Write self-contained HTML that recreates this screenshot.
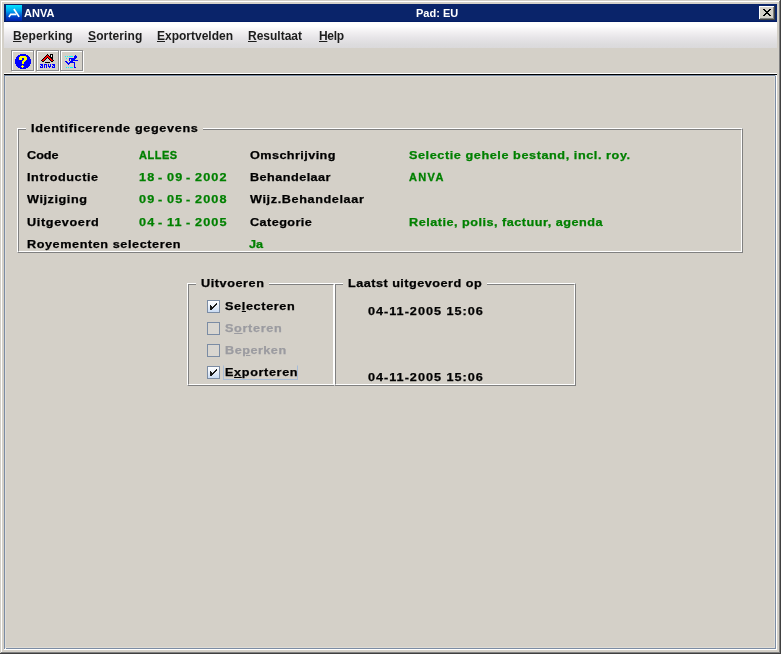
<!DOCTYPE html>
<html><head><meta charset="utf-8">
<style>
*{margin:0;padding:0;box-sizing:border-box}
html,body{width:781px;height:654px;overflow:hidden;background:#D4D0C8}
body{position:relative;font-family:"Liberation Sans",sans-serif}
.a{position:absolute}
.t{position:absolute;white-space:nowrap;font-weight:bold;line-height:1;will-change:transform;font-family:"Liberation Sans",sans-serif}
u{text-decoration:underline;text-underline-offset:1px;text-decoration-thickness:1px}
svg{overflow:visible}
</style></head><body>
<div class="a" style="left:0px;top:0px;width:781px;height:654px;background:#404040;"></div>
<div class="a" style="left:0px;top:0px;width:780px;height:653px;background:#D4D0C8;"></div>
<div class="a" style="left:1px;top:1px;width:779px;height:652px;background:#808080;"></div>
<div class="a" style="left:1px;top:1px;width:778px;height:651px;background:#FFFFFF;"></div>
<div class="a" style="left:2px;top:2px;width:777px;height:650px;background:#D4D0C8;"></div>
<div class="a" style="left:4px;top:4px;width:773px;height:18px;background:#0A246A;"></div>
<div class="a" style="left:4px;top:21px;width:773px;height:1px;background:#031d66;"></div>
<div class="a" style="left:6px;top:5px;width:16px;height:16px;background:linear-gradient(#00e4ff 0%,#00a8f0 35%,#0040c8 75%,#0020a8 100%);"></div>
<svg class="a" style="left:6px;top:5px" width="16" height="16" viewBox="0 0 16 16"><path d="M7.9 4 L13.1 11.9" stroke="#fff" stroke-width="1.7" fill="none"/><path d="M2.9 12 L4.7 9.4 L10.4 9.4" stroke="#fff" stroke-width="1.6" fill="none"/></svg>
<div class="a" style="left:759px;top:6px;width:16px;height:14px;background:#404040;"></div>
<div class="a" style="left:759px;top:6px;width:15px;height:13px;background:#FFFFFF;"></div>
<div class="a" style="left:760px;top:7px;width:14px;height:12px;background:#808080;"></div>
<div class="a" style="left:760px;top:7px;width:13px;height:11px;background:#D4D0C8;"></div>
<svg class="a" style="left:763px;top:9px" width="8" height="7" shape-rendering="crispEdges"><rect x="0" y="0" width="2" height="1" fill="#000"/><rect x="6" y="0" width="2" height="1" fill="#000"/><rect x="1" y="1" width="2" height="1" fill="#000"/><rect x="5" y="1" width="2" height="1" fill="#000"/><rect x="2" y="2" width="4" height="1" fill="#000"/><rect x="3" y="3" width="2" height="1" fill="#000"/><rect x="2" y="4" width="4" height="1" fill="#000"/><rect x="1" y="5" width="2" height="1" fill="#000"/><rect x="5" y="5" width="2" height="1" fill="#000"/><rect x="0" y="6" width="2" height="1" fill="#000"/><rect x="6" y="6" width="2" height="1" fill="#000"/></svg>
<div class="a" style="left:4px;top:22px;width:773px;height:26px;background:linear-gradient(#fdfcfa 0%,#ffffff 4%,#ffffff 16%,#f3f1f3 36%,#e6e4e7 62%,#dddcde 85%,#dad9db 100%);"></div>
<div class="a" style="left:4px;top:73px;width:773px;height:1px;background:#FFFFFF;"></div>
<div class="a" style="left:4px;top:74px;width:773px;height:1px;background:#000000;"></div>
<div class="a" style="left:12px;top:51px;width:23px;height:21px;border:1px solid #fff"></div>
<div class="a" style="left:11px;top:50px;width:23px;height:21px;border:1px solid #8c8c8c"></div>
<div class="a" style="left:37px;top:51px;width:23px;height:21px;border:1px solid #fff"></div>
<div class="a" style="left:36px;top:50px;width:23px;height:21px;border:1px solid #8c8c8c"></div>
<div class="a" style="left:61px;top:51px;width:23px;height:21px;border:1px solid #fff"></div>
<div class="a" style="left:60px;top:50px;width:23px;height:21px;border:1px solid #8c8c8c"></div>
<svg class="a" style="left:15px;top:54px" width="16" height="16" shape-rendering="crispEdges"><rect x="5" y="0" width="6" height="1" fill="#0000FF"/><rect x="3" y="1" width="10" height="1" fill="#0000FF"/><rect x="2" y="2" width="12" height="1" fill="#0000FF"/><rect x="1" y="3" width="14" height="1" fill="#0000FF"/><rect x="1" y="4" width="14" height="1" fill="#0000FF"/><rect x="0" y="5" width="16" height="1" fill="#0000FF"/><rect x="0" y="6" width="16" height="1" fill="#0000FF"/><rect x="0" y="7" width="16" height="1" fill="#0000FF"/><rect x="0" y="8" width="16" height="1" fill="#0000FF"/><rect x="0" y="9" width="16" height="1" fill="#0000FF"/><rect x="1" y="10" width="14" height="1" fill="#0000FF"/><rect x="1" y="11" width="14" height="1" fill="#0000FF"/><rect x="2" y="12" width="12" height="1" fill="#0000FF"/><rect x="3" y="13" width="10" height="1" fill="#0000FF"/><rect x="5" y="14" width="6" height="1" fill="#0000FF"/><rect x="5" y="2" width="6" height="1" fill="#FFFF00"/><rect x="4" y="3" width="8" height="1" fill="#FFFF00"/><rect x="4" y="4" width="3" height="1" fill="#FFFF00"/><rect x="9" y="4" width="3" height="1" fill="#FFFF00"/><rect x="4" y="5" width="3" height="1" fill="#FFFF00"/><rect x="9" y="5" width="3" height="1" fill="#FFFF00"/><rect x="8" y="6" width="3" height="1" fill="#FFFF00"/><rect x="7" y="7" width="3" height="1" fill="#FFFF00"/><rect x="7" y="8" width="2" height="1" fill="#FFFF00"/><rect x="7" y="9" width="2" height="1" fill="#FFFF00"/><rect x="7" y="11" width="1" height="1" fill="#FFFF00"/><rect x="6" y="12" width="3" height="1" fill="#FFFF00"/><rect x="7" y="13" width="1" height="1" fill="#FFFF00"/></svg>
<svg class="a" style="left:38px;top:52px" width="18" height="18" shape-rendering="crispEdges"><rect x="2" y="12" width="3" height="1" fill="#0000FF"/><rect x="6" y="12" width="3" height="1" fill="#0000FF"/><rect x="10" y="12" width="1" height="1" fill="#0000FF"/><rect x="12" y="12" width="1" height="1" fill="#0000FF"/><rect x="14" y="12" width="3" height="1" fill="#0000FF"/><rect x="3" y="13" width="2" height="1" fill="#0000FF"/><rect x="6" y="13" width="1" height="1" fill="#0000FF"/><rect x="8" y="13" width="1" height="1" fill="#0000FF"/><rect x="10" y="13" width="1" height="1" fill="#0000FF"/><rect x="12" y="13" width="1" height="1" fill="#0000FF"/><rect x="15" y="13" width="2" height="1" fill="#0000FF"/><rect x="2" y="14" width="1" height="1" fill="#0000FF"/><rect x="4" y="14" width="1" height="1" fill="#0000FF"/><rect x="6" y="14" width="1" height="1" fill="#0000FF"/><rect x="8" y="14" width="1" height="1" fill="#0000FF"/><rect x="10" y="14" width="3" height="1" fill="#0000FF"/><rect x="14" y="14" width="1" height="1" fill="#0000FF"/><rect x="16" y="14" width="1" height="1" fill="#0000FF"/><rect x="2" y="15" width="3" height="1" fill="#0000FF"/><rect x="6" y="15" width="1" height="1" fill="#0000FF"/><rect x="8" y="15" width="1" height="1" fill="#0000FF"/><rect x="11" y="15" width="1" height="1" fill="#0000FF"/><rect x="14" y="15" width="3" height="1" fill="#0000FF"/><rect x="9" y="2" width="1" height="1" fill="#000"/><rect x="8" y="3" width="1" height="1" fill="#000"/><rect x="10" y="3" width="1" height="1" fill="#000"/><rect x="7" y="4" width="1" height="1" fill="#000"/><rect x="11" y="4" width="1" height="1" fill="#000"/><rect x="6" y="5" width="1" height="1" fill="#000"/><rect x="9" y="5" width="1" height="1" fill="#000"/><rect x="5" y="6" width="1" height="1" fill="#000"/><rect x="8" y="6" width="1" height="1" fill="#000"/><rect x="10" y="6" width="1" height="1" fill="#000"/><rect x="4" y="7" width="1" height="1" fill="#000"/><rect x="7" y="7" width="1" height="1" fill="#000"/><rect x="11" y="7" width="1" height="1" fill="#000"/><rect x="14" y="7" width="1" height="1" fill="#000"/><rect x="3" y="8" width="1" height="1" fill="#000"/><rect x="6" y="8" width="1" height="1" fill="#000"/><rect x="12" y="8" width="1" height="1" fill="#000"/><rect x="15" y="8" width="1" height="1" fill="#000"/><rect x="4" y="9" width="2" height="1" fill="#000"/><rect x="13" y="9" width="2" height="1" fill="#000"/><rect x="7" y="10" width="5" height="1" fill="#000"/><rect x="12" y="2" width="3" height="1" fill="#000"/><rect x="12" y="3" width="1" height="1" fill="#000"/><rect x="14" y="3" width="1" height="1" fill="#000"/><rect x="12" y="4" width="1" height="1" fill="#000"/><rect x="14" y="4" width="1" height="1" fill="#000"/><rect x="12" y="5" width="3" height="1" fill="#000"/><rect x="13" y="6" width="2" height="1" fill="#000"/><rect x="13" y="3" width="1" height="1" fill="#f4f4f4"/><rect x="13" y="4" width="1" height="1" fill="#f4f4f4"/><rect x="9" y="3" width="1" height="1" fill="#FF0000"/><rect x="8" y="4" width="3" height="1" fill="#FF0000"/><rect x="7" y="5" width="2" height="1" fill="#FF0000"/><rect x="10" y="5" width="2" height="1" fill="#FF0000"/><rect x="6" y="6" width="2" height="1" fill="#FF0000"/><rect x="11" y="6" width="2" height="1" fill="#FF0000"/><rect x="5" y="7" width="2" height="1" fill="#FF0000"/><rect x="12" y="7" width="2" height="1" fill="#FF0000"/><rect x="4" y="8" width="2" height="1" fill="#FF0000"/><rect x="13" y="8" width="2" height="1" fill="#FF0000"/></svg>
<svg class="a" style="left:62px;top:52px" width="18" height="18" shape-rendering="crispEdges"><rect x="3" y="4" width="1" height="1" fill="#00FFFF"/><rect x="5" y="4" width="1" height="1" fill="#00FFFF"/><rect x="7" y="4" width="4" height="1" fill="#00FFFF"/><rect x="4" y="6" width="1" height="1" fill="#00FFFF"/><rect x="4" y="15" width="1" height="1" fill="#00FFFF"/><rect x="6" y="15" width="1" height="1" fill="#00FFFF"/><rect x="8" y="15" width="3" height="1" fill="#00FFFF"/><rect x="13" y="3" width="1" height="1" fill="#0000FF"/><rect x="12" y="4" width="3" height="1" fill="#0000FF"/><rect x="12" y="5" width="3" height="1" fill="#0000FF"/><rect x="7" y="6" width="7" height="1" fill="#0000FF"/><rect x="7" y="7" width="1" height="1" fill="#0000FF"/><rect x="9" y="7" width="4" height="1" fill="#0000FF"/><rect x="7" y="8" width="1" height="1" fill="#0000FF"/><rect x="9" y="8" width="7" height="1" fill="#0000FF"/><rect x="3" y="9" width="2" height="1" fill="#0000FF"/><rect x="8" y="9" width="3" height="1" fill="#0000FF"/><rect x="4" y="10" width="2" height="1" fill="#0000FF"/><rect x="7" y="10" width="6" height="1" fill="#0000FF"/><rect x="5" y="11" width="3" height="1" fill="#0000FF"/><rect x="12" y="11" width="1" height="1" fill="#0000FF"/><rect x="6" y="12" width="1" height="1" fill="#0000FF"/><rect x="12" y="12" width="1" height="1" fill="#0000FF"/><rect x="12" y="13" width="1" height="1" fill="#0000FF"/><rect x="12" y="14" width="1" height="1" fill="#0000FF"/><rect x="12" y="15" width="2" height="1" fill="#0000FF"/></svg>
<div class="a" style="left:4px;top:75px;width:773px;height:575px;background:#FFFFFF;"></div>
<div class="a" style="left:4px;top:75px;width:772px;height:574px;background:#7B8CA4;"></div>
<div class="a" style="left:5px;top:76px;width:770px;height:572px;background:#dfdcd6;"></div>
<div class="a" style="left:6px;top:77px;width:768px;height:570px;background:#D4D0C8;"></div>
<div class="a" style="left:775px;top:75px;width:1px;height:1px;background:#c9d2dc;"></div>
<div class="a" style="left:5px;top:648px;width:1px;height:1px;background:#f0f2f5;"></div>
<div class="a" style="left:17px;top:128px;width:726px;height:125px;border:1px solid;border-color:#fff #808080 #808080 #fff"></div>
<div class="a" style="left:18px;top:129px;width:724px;height:123px;border:1px solid;border-color:#808080 #fff #fff #808080"></div>
<div class="a" style="left:26px;top:126px;width:177px;height:6px;background:#D4D0C8;"></div>
<div class="a" style="left:187px;top:283px;width:148px;height:103px;border:1px solid;border-color:#fff #808080 #808080 #fff"></div>
<div class="a" style="left:188px;top:284px;width:146px;height:101px;border:1px solid;border-color:#808080 #fff #fff #808080"></div>
<div class="a" style="left:196px;top:281px;width:73px;height:6px;background:#D4D0C8;"></div>
<div class="a" style="left:334px;top:283px;width:242px;height:103px;border:1px solid;border-color:#fff #808080 #808080 #fff"></div>
<div class="a" style="left:335px;top:284px;width:240px;height:101px;border:1px solid;border-color:#808080 #fff #fff #808080"></div>
<div class="a" style="left:343px;top:281px;width:144px;height:6px;background:#D4D0C8;"></div>
<div class="a" style="left:333px;top:384px;width:1px;height:1px;background:#fff;"></div>
<div class="a" style="left:207px;top:300px;width:13px;height:13px;border:1px solid #7B8CA4;background:linear-gradient(#fbfcfe 0%,#eef3fa 40%,#c9dbf3 100%)"></div>
<svg class="a" style="left:210px;top:303px" width="7" height="7" shape-rendering="crispEdges"><rect x="6" y="0" width="1" height="1" fill="#1a1a1a"/><rect x="5" y="1" width="2" height="1" fill="#1a1a1a"/><rect x="0" y="2" width="1" height="1" fill="#1a1a1a"/><rect x="4" y="2" width="2" height="1" fill="#1a1a1a"/><rect x="0" y="3" width="2" height="1" fill="#1a1a1a"/><rect x="3" y="3" width="2" height="1" fill="#1a1a1a"/><rect x="0" y="4" width="2" height="1" fill="#1a1a1a"/><rect x="2" y="4" width="2" height="1" fill="#1a1a1a"/><rect x="0" y="5" width="3" height="1" fill="#1a1a1a"/><rect x="0" y="6" width="2" height="1" fill="#1a1a1a"/></svg>
<div class="a" style="left:207px;top:322px;width:13px;height:13px;border:1px solid #7B8CA4;background:#d9d6d0"></div>
<div class="a" style="left:207px;top:344px;width:13px;height:13px;border:1px solid #7B8CA4;background:#d9d6d0"></div>
<div class="a" style="left:207px;top:366px;width:13px;height:13px;border:1px solid #7B8CA4;background:linear-gradient(#fbfcfe 0%,#eef3fa 40%,#c9dbf3 100%)"></div>
<svg class="a" style="left:210px;top:369px" width="7" height="7" shape-rendering="crispEdges"><rect x="6" y="0" width="1" height="1" fill="#1a1a1a"/><rect x="5" y="1" width="2" height="1" fill="#1a1a1a"/><rect x="0" y="2" width="1" height="1" fill="#1a1a1a"/><rect x="4" y="2" width="2" height="1" fill="#1a1a1a"/><rect x="0" y="3" width="2" height="1" fill="#1a1a1a"/><rect x="3" y="3" width="2" height="1" fill="#1a1a1a"/><rect x="0" y="4" width="2" height="1" fill="#1a1a1a"/><rect x="2" y="4" width="2" height="1" fill="#1a1a1a"/><rect x="0" y="5" width="3" height="1" fill="#1a1a1a"/><rect x="0" y="6" width="2" height="1" fill="#1a1a1a"/></svg>
<div class="a" style="left:223px;top:365px;width:75px;height:15px;border:1px solid #a6bcd8;border-top-color:transparent"></div>
<div class="t" style="left:31px;top:123px;font-size:11px;transform:scaleX(1.15);transform-origin:0 0;-webkit-text-stroke:0.25px currentColor;letter-spacing:0.565px;color:#000">Identificerende gegevens</div>
<div class="t" style="left:27px;top:150px;font-size:11px;transform:scaleX(1.15);transform-origin:0 0;-webkit-text-stroke:0.25px currentColor;letter-spacing:0.0px;color:#000">Code</div>
<div class="t" style="left:27px;top:172px;font-size:11px;transform:scaleX(1.15);transform-origin:0 0;-webkit-text-stroke:0.25px currentColor;letter-spacing:0.5px;color:#000">Introductie</div>
<div class="t" style="left:27px;top:194px;font-size:11px;transform:scaleX(1.15);transform-origin:0 0;-webkit-text-stroke:0.25px currentColor;letter-spacing:0.5px;color:#000">Wijziging</div>
<div class="t" style="left:27px;top:217px;font-size:11px;transform:scaleX(1.15);transform-origin:0 0;-webkit-text-stroke:0.25px currentColor;letter-spacing:0.556px;color:#000">Uitgevoerd</div>
<div class="t" style="left:27px;top:239px;font-size:11px;transform:scaleX(1.15);transform-origin:0 0;-webkit-text-stroke:0.25px currentColor;letter-spacing:0.5px;color:#000">Royementen selecteren</div>
<div class="t" style="left:250px;top:150px;font-size:11px;transform:scaleX(1.15);transform-origin:0 0;-webkit-text-stroke:0.25px currentColor;letter-spacing:0.364px;color:#000">Omschrijving</div>
<div class="t" style="left:250px;top:172px;font-size:11px;transform:scaleX(1.15);transform-origin:0 0;-webkit-text-stroke:0.25px currentColor;letter-spacing:0.4px;color:#000">Behandelaar</div>
<div class="t" style="left:250px;top:194px;font-size:11px;transform:scaleX(1.15);transform-origin:0 0;-webkit-text-stroke:0.25px currentColor;letter-spacing:0.533px;color:#000">Wijz.Behandelaar</div>
<div class="t" style="left:250px;top:217px;font-size:11px;transform:scaleX(1.15);transform-origin:0 0;-webkit-text-stroke:0.25px currentColor;letter-spacing:0.375px;color:#000">Categorie</div>
<div class="t" style="left:139px;top:150px;font-size:11px;transform:scaleX(1.0);transform-origin:0 0;-webkit-text-stroke:0.3px currentColor;letter-spacing:0.5px;color:#008000">ALLES</div>
<div class="t" style="left:139px;top:172px;font-size:11px;transform:scaleX(1.15);transform-origin:0 0;-webkit-text-stroke:0.25px currentColor;letter-spacing:1.0px;color:#008000">18</div>
<div class="t" style="left:167px;top:172px;font-size:11px;transform:scaleX(1.15);transform-origin:0 0;-webkit-text-stroke:0.25px currentColor;letter-spacing:1.0px;color:#008000">09</div>
<div class="t" style="left:195px;top:172px;font-size:11px;transform:scaleX(1.15);transform-origin:0 0;-webkit-text-stroke:0.25px currentColor;letter-spacing:1.0px;color:#008000">2002</div>
<div class="t" style="left:158px;top:172px;font-size:11px;transform:scaleX(1.15);transform-origin:0 0;-webkit-text-stroke:0.25px currentColor;letter-spacing:0px;color:#008000">-</div>
<div class="t" style="left:186px;top:172px;font-size:11px;transform:scaleX(1.15);transform-origin:0 0;-webkit-text-stroke:0.25px currentColor;letter-spacing:0px;color:#008000">-</div>
<div class="t" style="left:139px;top:194px;font-size:11px;transform:scaleX(1.15);transform-origin:0 0;-webkit-text-stroke:0.25px currentColor;letter-spacing:1.0px;color:#008000">09</div>
<div class="t" style="left:167px;top:194px;font-size:11px;transform:scaleX(1.15);transform-origin:0 0;-webkit-text-stroke:0.25px currentColor;letter-spacing:1.0px;color:#008000">05</div>
<div class="t" style="left:195px;top:194px;font-size:11px;transform:scaleX(1.15);transform-origin:0 0;-webkit-text-stroke:0.25px currentColor;letter-spacing:1.0px;color:#008000">2008</div>
<div class="t" style="left:158px;top:194px;font-size:11px;transform:scaleX(1.15);transform-origin:0 0;-webkit-text-stroke:0.25px currentColor;letter-spacing:0px;color:#008000">-</div>
<div class="t" style="left:186px;top:194px;font-size:11px;transform:scaleX(1.15);transform-origin:0 0;-webkit-text-stroke:0.25px currentColor;letter-spacing:0px;color:#008000">-</div>
<div class="t" style="left:139px;top:217px;font-size:11px;transform:scaleX(1.15);transform-origin:0 0;-webkit-text-stroke:0.25px currentColor;letter-spacing:1.0px;color:#008000">04</div>
<div class="t" style="left:167px;top:217px;font-size:11px;transform:scaleX(1.15);transform-origin:0 0;-webkit-text-stroke:0.25px currentColor;letter-spacing:1.0px;color:#008000">11</div>
<div class="t" style="left:195px;top:217px;font-size:11px;transform:scaleX(1.15);transform-origin:0 0;-webkit-text-stroke:0.25px currentColor;letter-spacing:1.0px;color:#008000">2005</div>
<div class="t" style="left:158px;top:217px;font-size:11px;transform:scaleX(1.15);transform-origin:0 0;-webkit-text-stroke:0.25px currentColor;letter-spacing:0px;color:#008000">-</div>
<div class="t" style="left:186px;top:217px;font-size:11px;transform:scaleX(1.15);transform-origin:0 0;-webkit-text-stroke:0.25px currentColor;letter-spacing:0px;color:#008000">-</div>
<div class="t" style="left:249px;top:239px;font-size:11px;transform:scaleX(1.15);transform-origin:0 0;-webkit-text-stroke:0.25px currentColor;letter-spacing:0.0px;color:#008000">Ja</div>
<div class="t" style="left:409px;top:150px;font-size:11px;transform:scaleX(1.15);transform-origin:0 0;-webkit-text-stroke:0.25px currentColor;letter-spacing:0.5px;color:#008000">Selectie gehele bestand, incl. roy.</div>
<div class="t" style="left:409px;top:172px;font-size:11px;transform:scaleX(1.0);transform-origin:0 0;-webkit-text-stroke:0.3px currentColor;letter-spacing:1.333px;color:#008000">ANVA</div>
<div class="t" style="left:409px;top:217px;font-size:11px;transform:scaleX(1.15);transform-origin:0 0;-webkit-text-stroke:0.25px currentColor;letter-spacing:0.433px;color:#008000">Relatie, polis, factuur, agenda</div>
<div class="t" style="left:201px;top:278px;font-size:11px;transform:scaleX(1.15);transform-origin:0 0;-webkit-text-stroke:0.25px currentColor;letter-spacing:0.5px;color:#000">Uitvoeren</div>
<div class="t" style="left:348px;top:278px;font-size:11px;transform:scaleX(1.15);transform-origin:0 0;-webkit-text-stroke:0.25px currentColor;letter-spacing:0.421px;color:#000">Laatst uitgevoerd op</div>
<div class="t" style="left:368px;top:306px;font-size:11px;transform:scaleX(1.15);transform-origin:0 0;-webkit-text-stroke:0.25px currentColor;letter-spacing:0.867px;color:#000">04-11-2005 15:06</div>
<div class="t" style="left:368px;top:372px;font-size:11px;transform:scaleX(1.15);transform-origin:0 0;-webkit-text-stroke:0.25px currentColor;letter-spacing:0.867px;color:#000">04-11-2005 15:06</div>
<div class="t" style="left:225px;top:301px;font-size:11px;transform:scaleX(1.15);transform-origin:0 0;-webkit-text-stroke:0.25px currentColor;letter-spacing:0.556px;color:#000">Se<u>l</u>ecteren</div>
<div class="t" style="left:225px;top:323px;font-size:11px;transform:scaleX(1.15);transform-origin:0 0;-webkit-text-stroke:0.25px currentColor;letter-spacing:0.571px;color:#9b9ba0">S<u>o</u>rteren</div>
<div class="t" style="left:225px;top:345px;font-size:11px;transform:scaleX(1.15);transform-origin:0 0;-webkit-text-stroke:0.25px currentColor;letter-spacing:0.429px;color:#9b9ba0">Be<u>p</u>erken</div>
<div class="t" style="left:225px;top:367px;font-size:11px;transform:scaleX(1.15);transform-origin:0 0;-webkit-text-stroke:0.25px currentColor;letter-spacing:0.556px;color:#000">E<u>x</u>porteren</div>
<div class="t" style="left:13px;top:30px;font-size:12px;letter-spacing:0.125px;color:#1c1c1c"><u>B</u>eperking</div>
<div class="t" style="left:88px;top:30px;font-size:12px;letter-spacing:0.125px;color:#1c1c1c"><u>S</u>ortering</div>
<div class="t" style="left:157px;top:30px;font-size:12px;letter-spacing:0.0px;color:#1c1c1c"><u>E</u>xportvelden</div>
<div class="t" style="left:248px;top:30px;font-size:12px;letter-spacing:0.0px;color:#1c1c1c"><u>R</u>esultaat</div>
<div class="t" style="left:319px;top:30px;font-size:12px;letter-spacing:-0.333px;color:#1c1c1c"><u>H</u>elp</div>
<div class="t" style="left:24px;top:8px;font-size:11px;letter-spacing:0.0px;color:#fff">ANVA</div>
<div class="t" style="left:416px;top:8px;font-size:11px;letter-spacing:0.0px;color:#fff">Pad: EU</div>
</body></html>
